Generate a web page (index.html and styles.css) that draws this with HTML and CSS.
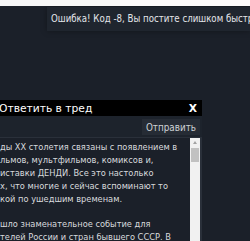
FILE: index.html
```html
<!DOCTYPE html>
<html lang="ru">
<head>
    <meta charset="UTF-8">
    <meta name="viewport" content="width=device-width, initial-scale=1.0">
    <title>Ответить в тред</title>
    <link rel="stylesheet" href="styles.css">
</head>
<body>

<div class="topbar">
    <div class="topbar-left"></div>
    <div class="topbar-right"></div>
</div>

<div class="toast">Ошибка! Код -8, Вы постите слишком быстро</div>

<div class="reply">
    <div class="reply-head">
        <span class="reply-title">Ответить в тред</span>
        <span class="reply-close">X</span>
    </div>
    <div class="reply-actions">
        <button class="send">Отправить</button>
    </div>
    <div class="reply-body">
        <div class="reply-text">
            <div>ды XX столетия связаны с появлением в</div>
            <div>льмов, мультфильмов, комиксов и,</div>
            <div>иставки ДЕНДИ. Все это настолько</div>
            <div>х, что многие и сейчас вспоминают то</div>
            <div>кой по ушедшим временам.</div>
            <div>&nbsp;</div>
            <div>шло знаменательное событие для</div>
            <div>телей России и стран бывшего СССР. В</div>
        </div>
        <div class="scrollbar">
            <div class="scroll-up"></div>
            <div class="scroll-thumb"></div>
        </div>
    </div>
</div>

</body>
</html>
```

FILE: styles.css
```css
body {
    margin: 0;
    width: 250px;
    height: 241px;
    overflow: hidden;
    background-color: #1b2029;
    font-family: 'DejaVu Sans Condensed', 'DejaVu Sans', sans-serif;
    color: #e4e6ea;
}

.topbar {
    display: flex;
    height: 6px;
}

.topbar-left {
    width: 120px;
    background-color: #f7f7f7;
}

.topbar-right {
    flex: 1;
    background-color: #fdfbfb;
}

.toast {
    margin: 1px 0 0 47px;
    padding: 0 4px;
    height: 24px;
    line-height: 24px;
    font-size: 9.6px;
    white-space: nowrap;
    background-color: #1f252e;
    box-shadow: 0 0 6px rgba(0, 0, 0, 0.35);
}

.reply {
    width: 202px;
    margin-top: 69px;
}

.reply-head {
    display: flex;
    justify-content: space-between;
    align-items: center;
    height: 16px;
    padding-right: 5px;
    background-color: #000;
    font-family: 'DejaVu Sans', sans-serif;
    font-size: 10.7px;
    color: #fff;
}

.reply-title {
    margin-left: -1px;
}

.reply-close {
    font-weight: bold;
}

.reply-actions {
    display: flex;
    justify-content: flex-end;
    height: 22px;
    padding: 3px 2px 0 0;
    box-sizing: border-box;
    background-color: #1d232c;
    border-bottom: 1px solid #2a303a;
}

.send {
    padding: 0 4px;
    height: 16px;
    border: none;
    background-color: #262c35;
    color: #cfd2d6;
    font-family: inherit;
    font-size: 9.8px;
}

.reply-body {
    display: flex;
    height: 110px;
    border-right: 2px solid #2a303a;
}

.reply-text {
    flex: 1;
    padding-top: 3px;
    font-size: 9.2px;
    line-height: 12.9px;
    white-space: nowrap;
    overflow: hidden;
    color: #d8dadd;
}

.scrollbar {
    width: 10px;
    background-color: #f1f1f1;
}

.scroll-up {
    height: 10px;
    position: relative;
}

.scroll-up::after {
    content: '';
    position: absolute;
    left: 3px;
    top: 3px;
    border-left: 2px solid transparent;
    border-right: 2px solid transparent;
    border-bottom: 3px solid #a3a3a3;
}

.scroll-thumb {
    margin: 0 1px;
    height: 14px;
    background-color: #c1c1c1;
}
```
